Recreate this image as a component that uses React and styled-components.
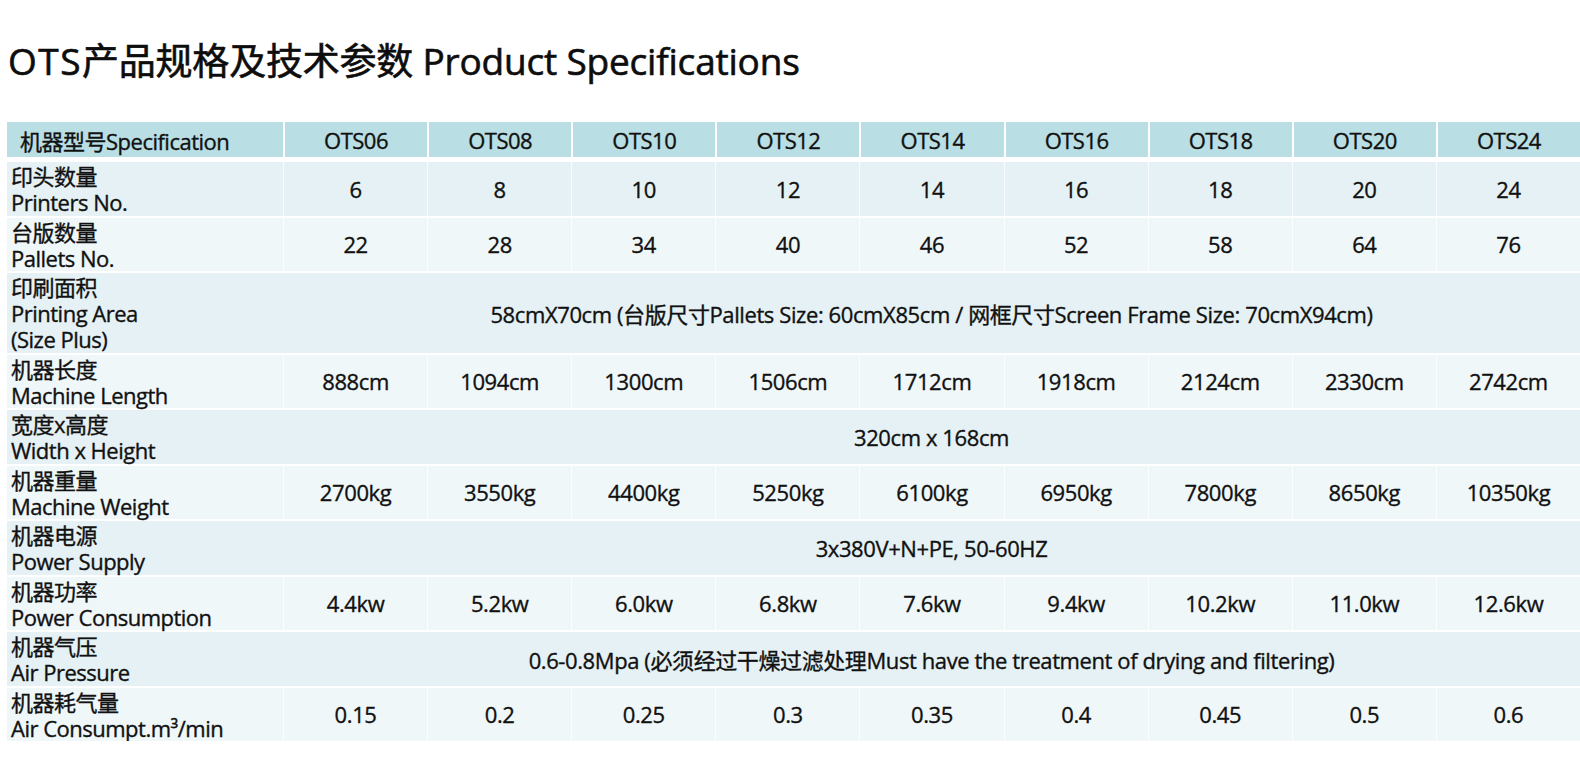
import React from "react";
import styled, { createGlobalStyle } from "styled-components";

const Global = createGlobalStyle`
  html, body { margin: 0; padding: 0; background: #ffffff; }
  body { font-family: "Open Sans", "Noto Sans CJK SC", sans-serif; color: #111111; overflow: hidden; }
`;

const Page = styled.div`
  padding: 37px 0 0 7px;
  width: 1573px;
`;

const Title = styled.h1`
  margin: 0 0 0 1px;
  font-size: 37px;
  line-height: 48px;
  font-weight: 400;
  letter-spacing: -0.2px;
  color: #0d0d0d;
  -webkit-text-stroke: 0.6px #0d0d0d;
  font-family: "Open Sans", "Noto Sans CJK SC", sans-serif;
`;

const Brand = styled.span`
  letter-spacing: 1.5px;
`;

const Table = styled.div`
  margin-top: 37px;
  display: flex;
  flex-direction: column;
  gap: 2px;
`;

const COLS = "276px repeat(9, 1fr)";

const HeadRow = styled.div`
  display: grid;
  grid-template-columns: ${COLS};
  height: 35px;
  margin-bottom: 3px;
`;

const HeadCell = styled.div`
  background: #b9dee3;
  display: flex;
  align-items: center;
  justify-content: ${(p) => (p.$first ? "flex-start" : "center")};
  padding-left: ${(p) => (p.$first ? "13px" : "0")};
  border-left: ${(p) => (p.$first ? "none" : "2px solid #ffffff")};
  font-size: 22px;
  letter-spacing: -0.5px;
  -webkit-text-stroke: 0.35px #111;
`;

const Row = styled.div`
  display: grid;
  grid-template-columns: ${COLS};
  background: ${(p) => (p.$dark ? "#e5f1f4" : "#eff7f9")};
`;

const Label = styled.div`
  padding: 1px 4px 0.5px;
  font-size: 22px;
  line-height: 26px;
  letter-spacing: -0.5px;
  -webkit-text-stroke: 0.35px #111;
`;

const LabelLine = styled.div`
  white-space: nowrap;
`;

const Cell = styled.div`
  display: flex;
  align-items: center;
  justify-content: center;
  border-left: 1px solid rgba(255, 255, 255, 0.75);
  font-size: 22px;
  letter-spacing: -0.4px;
  -webkit-text-stroke: 0.35px #111;
`;

const SpanCell = styled(Cell)`
  grid-column: 2 / span 9;
  border-left: none;
`;

const models = ["OTS06", "OTS08", "OTS10", "OTS12", "OTS14", "OTS16", "OTS18", "OTS20", "OTS24"];

const rows = [
  { lines: ["印头数量", "Printers No."], values: ["6", "8", "10", "12", "14", "16", "18", "20", "24"] },
  { lines: ["台版数量", "Pallets No."], values: ["22", "28", "34", "40", "46", "52", "58", "64", "76"] },
  {
    lines: ["印刷面积", "Printing Area", "(Size Plus)"],
    span: "58cmX70cm (台版尺寸Pallets Size: 60cmX85cm / 网框尺寸Screen Frame Size: 70cmX94cm)",
  },
  {
    lines: ["机器长度", "Machine Length"],
    values: ["888cm", "1094cm", "1300cm", "1506cm", "1712cm", "1918cm", "2124cm", "2330cm", "2742cm"],
  },
  { lines: ["宽度x高度", "Width x Height"], span: "320cm x 168cm" },
  {
    lines: ["机器重量", "Machine Weight"],
    values: ["2700kg", "3550kg", "4400kg", "5250kg", "6100kg", "6950kg", "7800kg", "8650kg", "10350kg"],
  },
  { lines: ["机器电源", "Power Supply"], span: "3x380V+N+PE, 50-60HZ" },
  {
    lines: ["机器功率", "Power Consumption"],
    values: ["4.4kw", "5.2kw", "6.0kw", "6.8kw", "7.6kw", "9.4kw", "10.2kw", "11.0kw", "12.6kw"],
  },
  {
    lines: ["机器气压", "Air Pressure"],
    span: "0.6-0.8Mpa (必须经过干燥过滤处理Must have the treatment of drying and filtering)",
  },
  {
    lines: ["机器耗气量", "Air Consumpt.m³/min"],
    values: ["0.15", "0.2", "0.25", "0.3", "0.35", "0.4", "0.45", "0.5", "0.6"],
  },
];

export default function App() {
  return (
    <>
      <Global />
      <Page>
        <Title>
          <Brand>OTS</Brand>产品规格及技术参数 Product Specifications
        </Title>
        <Table>
          <HeadRow>
            <HeadCell $first>机器型号Specification</HeadCell>
            {models.map((m) => (
              <HeadCell key={m}>{m}</HeadCell>
            ))}
          </HeadRow>
          {rows.map((r, i) => (
            <Row key={i} $dark={i % 2 === 0}>
              <Label>
                {r.lines.map((l, j) => (
                  <LabelLine key={j}>{l}</LabelLine>
                ))}
              </Label>
              {r.span ? (
                <SpanCell>{r.span}</SpanCell>
              ) : (
                r.values.map((v, j) => <Cell key={j}>{v}</Cell>)
              )}
            </Row>
          ))}
        </Table>
      </Page>
    </>
  );
}
